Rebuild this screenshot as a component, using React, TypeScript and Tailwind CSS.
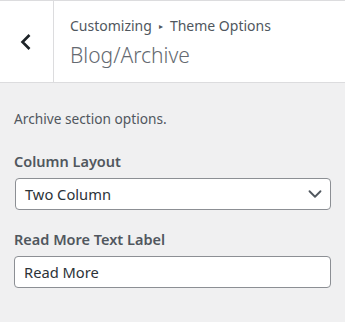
import { ChevronDown } from "lucide-react";

const font = { fontFamily: '"Noto Sans", "Open Sans", sans-serif' };

export default function App() {
  return (
    <div
      className="w-[345px] h-[322px] bg-[#f0f0f1] overflow-hidden"
      style={font}
    >
      <div className="flex h-[83px] bg-white border-t border-b border-[#dcdcde]">
        <button className="w-[54px] flex items-center justify-center border-r border-[#dcdcde] text-[#1d2327]">
          <svg width="20" height="20" viewBox="0 0 20 20" className="ml-[-1px]">
            <path
              d="M13.5 3 L6.5 10 L13.5 17"
              fill="none"
              stroke="currentColor"
              strokeWidth="2.6"
            />
          </svg>
        </button>
        <div className="flex flex-col pl-4 pt-[15px]">
          <div className="flex items-center text-[14px] leading-5 text-[#50575e]">
            <span>Customizing</span>
            <span className="mx-[7px] text-[8px]">▸</span>
            <span>Theme Options</span>
          </div>
          <h3 className="text-[21px] leading-[26px] font-light text-[#646970] mt-[6px]">
            Blog/Archive
          </h3>
        </div>
      </div>

      <div className="px-[14px]">
        <p className="text-[13.7px] leading-5 text-[#50575e] mt-[26px]">
          Archive section options.
        </p>

        <div className="mt-[22px] text-[14.5px] leading-5 font-semibold text-[#50575e]">
          Column Layout
        </div>
        <div className="mt-[7px] ml-px h-[32px] flex items-center justify-between bg-white border border-[#8c8f94] rounded-[4px] pl-[9px] pr-[4px] text-[14.7px] text-[#2c3338]">
          <span>Two Column</span>
          <ChevronDown className="w-[22px] h-[22px] text-[#50575e]" strokeWidth={2} />
        </div>

        <div className="mt-[19px] text-[14.5px] leading-5 font-semibold text-[#50575e]">
          Read More Text Label
        </div>
        <div className="mt-[7px] h-[32px] flex items-center bg-white border border-[#8c8f94] rounded-[4px] pl-[9px] text-[14.7px] text-[#2c3338]">
          Read More
        </div>
      </div>
    </div>
  );
}
